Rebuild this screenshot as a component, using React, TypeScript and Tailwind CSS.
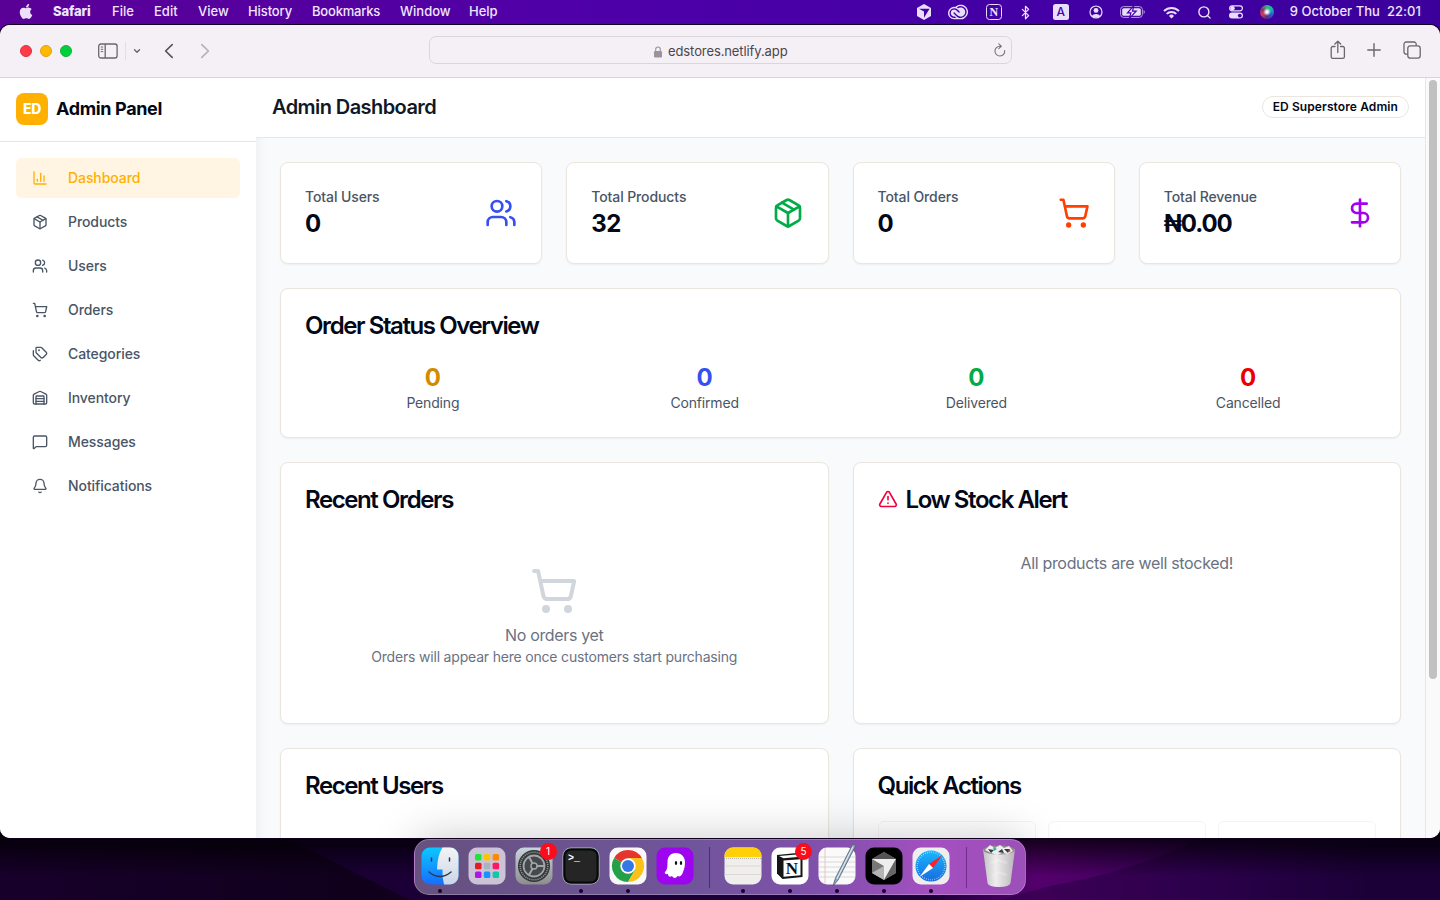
import React from "react";
import {
  Users, Package, ShoppingCart, DollarSign, Tags, Warehouse, MessageSquare, Bell,
  TriangleAlert, Search, ChevronDown, Bluetooth,
} from "lucide-react";
import { FaApple } from "react-icons/fa";
import { SiAdobecreativecloud } from "react-icons/si";

function ChartIcon() {
  return (
    <svg className="size-4" viewBox="0 0 24 24" fill="none" stroke="currentColor" strokeWidth="2" strokeLinecap="round" strokeLinejoin="round">
      <path d="M3 3v16a2 2 0 0 0 2 2h16" /><path d="M18 17V9" /><path d="M13 17V5" /><path d="M8 17v-3" />
    </svg>
  );
}

function CubeGlyph() {
  return (
    <svg className="w-[16px] h-[18px]" viewBox="0 0 16 18">
      <path d="M8 1 15 5v8l-7 4-7-4V5z" fill="#e9defa" />
      <path d="M3 5.8h10.6L8 14.8V8.6z" fill="#4700a8" />
    </svg>
  );
}

function MenuBar() {
  return (
    <div className="flex h-6 shrink-0 items-center justify-between text-[13px] font-medium text-[#efe5ff]">
      <div className="flex h-6 items-center pl-[19px]">
        <FaApple className="mr-[20px] h-[17px] w-[14px] -mt-px text-[#eee0fa]" />
        <span className="w-[59px] font-extrabold tracking-[-0.1px]">Safari</span>
        <span className="w-[42px]">File</span>
        <span className="w-[44px]">Edit</span>
        <span className="w-[50px]">View</span>
        <span className="w-[64px] tracking-[-0.1px]">History</span>
        <span className="w-[88px] tracking-[-0.2px]">Bookmarks</span>
        <span className="w-[69px]">Window</span>
        <span>Help</span>
      </div>
      <div className="flex h-6 items-center pr-[19px]">
        <CubeGlyph />
        <SiAdobecreativecloud className="ml-[16px] size-[20px] text-[#e9defa]" />
        <span className="ml-[18px] flex size-[16px] items-center justify-center rounded-[3.5px] border-[1.5px] border-[#e9defa] font-['Liberation_Serif'] text-[12px] font-bold leading-none">N</span>
        <Bluetooth className="ml-[16px] size-[15px]" strokeWidth={2} />
        <span className="ml-[20px] flex size-[16px] items-center justify-center rounded-[2.5px] bg-[#e9defa] text-[12px] font-medium leading-none text-[#4700a8]">A</span>
        <svg className="ml-[20px] size-[14px]" viewBox="0 0 14 14">
          <circle cx="7" cy="7" r="6" fill="none" stroke="#e9defa" strokeWidth="1.2" />
          <circle cx="7" cy="5.4" r="2.4" fill="#e9defa" /><path d="M2.8 11a4.6 3.4 0 0 1 8.4 0 6 6 0 0 1-8.4 0" fill="#e9defa" />
        </svg>
        <svg className="ml-[17px] h-[12px] w-[25px]" viewBox="0 0 25 12">
          <rect x=".6" y=".6" width="21.8" height="10.8" rx="3" fill="none" stroke="#b99be6" strokeWidth="1" />
          <rect x="2.2" y="2.2" width="18.6" height="7.6" rx="1.6" fill="#e9defa" />
          <path d="M13.8-.4 7.5 6.8h3.4L9.4 12.4l6.8-7.2h-3.6z" fill="#e9defa" stroke="#4700a8" strokeWidth="1.2" />
          <path d="M23.6 4v4q1.2-.6 1.2-2t-1.2-2" fill="#b99be6" />
        </svg>
        <svg className="ml-[18px] h-[13px] w-[17px]" viewBox="0 0 17 13" fill="none" stroke="#e9defa" strokeWidth="2">
          <path d="M1 5a10.6 10.6 0 0 1 15 0M3.7 7.9a6.8 6.8 0 0 1 9.6 0" /><path d="m8.5 12.5-2.5-2.6a3.5 3.500 0 0 1 5 0z" fill="#e9defa" stroke="none" />
        </svg>
        <Search className="ml-[17px] size-[15px]" strokeWidth={2.2} />
        <svg className="ml-[17px] h-[14px] w-[14px]" viewBox="0 0 14 14">
          <rect x=".6" y=".8" width="12.8" height="5" rx="2.500" fill="none" stroke="#e9defa" strokeWidth="1.2" /><circle cx="3.5" cy="3.3" r="2.2" fill="#e9defa" />
          <rect x="0" y="7.6" width="14" height="6" rx="3" fill="#e9defa" /><circle cx="10.8" cy="10.6" r="1.9" fill="#4700a8" />
        </svg>
        <span className="ml-[17px] size-[14px] rounded-full bg-[radial-gradient(circle,#ffffff_8%,transparent_40%),conic-gradient(#37b58a,#1bb3a4,#285ad6,#54307f,#d93468,#7d3d5c,#37b58a)]" />
        <span className="ml-[16px] whitespace-pre tracking-[0.05px]">9 October Thu  22:01</span>
      </div>
    </div>
  );
}

function Toolbar() {
  return (
    <div className="flex h-[53px] shrink-0 items-center border-b border-[#d8d4da] bg-[#f5eff6] text-[#6b666c]">
      <div className="flex w-[429px] items-center pl-5">
        <span className="size-3 rounded-full border border-[#e0303e] bg-[#ff3b46]" />
        <span className="ml-2 size-3 rounded-full border border-[#e0a314] bg-[#ffb900]" />
        <span className="ml-2 size-3 rounded-full border border-[#10b434] bg-[#00cf3c]" />
        <svg className="ml-[26px] h-[16px] w-[20px]" viewBox="0 0 20 16" fill="none" stroke="currentColor" strokeWidth="1.3">
          <rect x=".7" y="1" width="18.4" height="14" rx="2.2" /><path d="M7.2 1v14" /><path d="M2.8 4h2.4M2.8 6.3h2.4M2.8 8.6h2.4" strokeWidth="1" />
        </svg>
        <span className="ml-[7px] h-[18px] w-px bg-[#e2dce3]" />
        <ChevronDown className="ml-[6px] size-[10px]" strokeWidth={3.4} />
        <svg className="ml-[22px] h-[16px] w-[10px]" viewBox="0 0 10 16" fill="none" stroke="#565257" strokeWidth="1.6" strokeLinecap="round" strokeLinejoin="round"><path d="M8.2 1.6 1.6 8l6.6 6.4" /></svg>
        <svg className="ml-[26px] h-[16px] w-[10px]" viewBox="0 0 10 16" fill="none" stroke="#b5b0b7" strokeWidth="1.6" strokeLinecap="round" strokeLinejoin="round"><path d="M1.8 1.6 8.4 8l-6.6 6.4" /></svg>
      </div>
      <div className="-mt-[2px] flex h-7 w-[583px] items-center rounded-[7px] border border-[#dbd5dc] text-[13px] text-[#4a474b]">
        <span className="w-[223px]" />
        <svg className="mr-[5px] mt-[3px] h-[12px] w-[10px]" viewBox="0 0 10 12"><rect x="1" y="5" width="8" height="6.500" rx="1.200" fill="#99949b" /><path d="M2.700 5.500V3.300a2.300 2.300 0 0 1 4.600 0v2.200" fill="none" stroke="#99949b" strokeWidth="1.100" /></svg>
        <span className="pt-[3px] tracking-[-0.1px]">edstores.netlify.app</span>
        <span className="flex flex-1 justify-end pr-[5px]">
          <svg className="h-[14px] w-[12px]" viewBox="0 0 12 14" fill="none" stroke="#77727a" strokeWidth="1.1" strokeLinecap="round"><path d="M10.7 7.6A4.9 4.9 0 1 1 6 3.2h1M4.8.9 7.3 3.2 4.8 5.6" /></svg>
        </span>
      </div>
      <div className="ml-auto flex items-center pr-[19px]">
        <svg className="-mt-[3px] h-[20px] w-[16px]" viewBox="0 0 16 20" fill="none" stroke="currentColor" strokeWidth="1.3" strokeLinecap="round" strokeLinejoin="round"><path d="M5 6.5H2.8a1.6 1.6 0 0 0-1.6 1.6v8.6a1.6 1.6 0 0 0 1.6 1.6h10a1.6 1.6 0 0 0 1.6-1.6V8.100a1.6 1.6 0 0 0-1.600-1.600H10.600M7.800 12.500V1.200M4.900 4 7.800 1.200 10.700 4" /></svg>
        <svg className="-mt-[2px] ml-[21px] size-[14px]" viewBox="0 0 14 14" stroke="currentColor" strokeWidth="1.4" strokeLinecap="round"><path d="M7 .8v12.400M.8 7h12.400" /></svg>
        <svg className="-mt-[2px] ml-[22px] h-[18px] w-[18px]" viewBox="0 0 18 18" fill="none" stroke="currentColor" strokeWidth="1.3"><rect x="4.800" y="4.800" width="12.400" height="12.400" rx="2.400" /><path d="M4.800 13.200H3.200A2.200 2.200 0 0 1 1 11V3.200A2.200 2.200 0 0 1 3.200 1H11a2.200 2.200 0 0 1 2.200 2.200v1.600" /></svg>
      </div>
    </div>
  );
}

const nav = [
  { label: "Products", icon: Package },
  { label: "Users", icon: Users },
  { label: "Orders", icon: ShoppingCart },
  { label: "Categories", icon: Tags },
  { label: "Inventory", icon: Warehouse },
  { label: "Messages", icon: MessageSquare },
  { label: "Notifications", icon: Bell },
];

function Sidebar() {
  return (
    <aside className="z-10 flex w-64 shrink-0 flex-col bg-white shadow-[0_10px_15px_-3px_rgba(0,0,0,0.1)]">
      <div className="flex h-16 shrink-0 items-center gap-2 border-b border-gray-200 px-4 pb-[2px]">
        <span className="flex size-8 items-center justify-center rounded-lg bg-[#ffb000] text-[14px] font-extrabold tracking-[-0.3px] text-white">ED</span>
        <span className="text-[18px] font-bold tracking-[-0.35px] text-[#020817]">Admin Panel</span>
      </div>
      <nav className="flex flex-col gap-1 p-4 text-sm font-medium tracking-[-0.08px] text-gray-600">
        <a className="flex h-10 items-center gap-5 rounded-md bg-[#fff5e2] px-4 text-[#ffb000]"><ChartIcon />Dashboard</a>
        {nav.map(({ label, icon: Icon }) => (
          <a key={label} className="flex h-10 items-center gap-5 rounded-md px-4"><Icon className="size-4" />{label}</a>
        ))}
      </nav>
    </aside>
  );
}

const card = "rounded-lg border border-[#ebe6dd] bg-white shadow-[0_1px_2px_rgba(0,0,0,0.05)]";
const heading = "pt-px text-2xl font-semibold leading-6 tracking-[-1.41px] text-[#020817]";

const stats = [
  { label: "Total Users", value: "0", icon: Users, color: "text-[#364ff0]" },
  { label: "Total Products", value: "32", icon: Package, color: "text-[#00ab48]" },
  { label: "Total Orders", value: "0", icon: ShoppingCart, color: "text-[#ff4000]" },
  { label: "Total Revenue", value: "₦0.00", icon: DollarSign, color: "text-[#a400f0]" },
];

const statuses = [
  { label: "Pending", color: "text-[#d28b00]" },
  { label: "Confirmed", color: "text-[#364ff0]" },
  { label: "Delivered", color: "text-[#00ab48]" },
  { label: "Cancelled", color: "text-[#ea0000]" },
];

function Dashboard() {
  return (
    <main className="flex min-w-0 flex-1 flex-col bg-[#f9fafc]">
      <header className="z-20 flex h-[60px] shrink-0 items-center justify-between border-b border-gray-200 bg-white pb-[2px] pl-4 pr-4">
        <h1 className="text-xl font-semibold tracking-[-0.57px] text-[#111827]">Admin Dashboard</h1>
        <span className="flex h-[22px] items-center rounded-full border border-[#ebe6dd] px-[10px] text-xs font-semibold tracking-[0.1px] text-[#020817]">ED Superstore Admin</span>
      </header>
      <div className="flex flex-col gap-6 p-6">
        <div className="grid grid-cols-4 gap-6">
          {stats.map(({ label, value, icon: Icon, color }) => (
            <section key={label} className={`${card} flex h-[102px] items-center justify-between px-6`}>
              <div>
                <p className="text-sm font-medium tracking-[-0.1px] text-gray-600">{label}</p>
                <p className={`-mb-px pt-px text-2xl font-bold text-[#020817] ${value.length > 2 ? "tracking-[-1.1px]" : "tracking-[-0.4px]"}`}>{value}</p>
              </div>
              <Icon className={`size-8 ${color}`} />
            </section>
          ))}
        </div>
        <section className={`${card} h-[150px] p-6`}>
          <h2 className={heading}>Order Status Overview</h2>
          <div className="mt-6 grid grid-cols-4 gap-4 text-center">
            {statuses.map(({ label, color }) => (
              <div key={label}>
                <p className={`text-2xl font-bold ${color}`}>0</p>
                <p className="-mt-px text-sm tracking-[-0.17px] text-gray-600">{label}</p>
              </div>
            ))}
          </div>
        </section>
        <div className="grid grid-cols-2 gap-6">
          <section className={`${card} h-[262px] p-6`}>
            <h2 className={heading}>Recent Orders</h2>
            <div className="flex flex-col items-center pt-[55px] text-gray-500">
              <ShoppingCart className="size-12 text-gray-300" />
              <p className="mt-2 text-base tracking-[-0.35px]">No orders yet</p>
              <p className="text-sm tracking-[-0.19px]">Orders will appear here once customers start purchasing</p>
            </div>
          </section>
          <section className={`${card} h-[262px] p-6`}>
            <h2 className={`${heading} flex items-center gap-2`}><TriangleAlert className="-mt-[2px] size-5 text-[#f5003d]" />Low Stock Alert</h2>
            <p className="pt-[39px] text-center text-base tracking-[-0.32px] text-gray-500">All products are well stocked!</p>
          </section>
          <section className={`${card} h-[262px] p-6`}><h2 className={heading}>Recent Users</h2></section>
          <section className={`${card} h-[262px] p-6`}>
            <h2 className={heading}>Quick Actions</h2>
            <div className="mt-[23px] grid grid-cols-3 gap-3">
              <div className="h-24 rounded-md border border-[#f4f4f4]" />
              <div className="h-24 rounded-md border border-[#f4f4f4]" />
              <div className="h-24 rounded-md border border-[#f4f4f4]" />
            </div>
          </section>
        </div>
      </div>
    </main>
  );
}

function DockItem({ children, running, badge }: { children: React.ReactNode; running?: boolean; badge?: string }) {
  return (
    <div className="relative flex w-[47px] shrink-0 flex-col items-center pt-[5px]">
      {children}
      {running && <span className="mt-[2px] size-1 rounded-full bg-[#14002c]" />}
      {badge && <span className="absolute right-[1px] top-[3px] flex size-[17px] items-center justify-center rounded-full bg-[#fb0d1b] text-[10px] text-white">{badge}</span>}
    </div>
  );
}

const tile = "size-[42px]";
const launchColors = ["#20e33c", "#ffc400", "#ff8a00", "#e51b24", "#a9b4be", "#ff1665", "#b015e8", "#1795ff", "#12c7a5"];

function Dock() {
  return (
    <div className="absolute left-[414px] top-[839px] flex h-[56px] w-[612px] rounded-[15px] border border-white/25 bg-[linear-gradient(90deg,#66517f_0%,#70559a_45%,#8250ac_68%,#a54fc1_85%,#9c50b8_100%)] pl-[1.5px]">
      <DockItem running>
        <svg className={tile} viewBox="0 0 42 42">
          <defs><linearGradient id="finder" x2="0" y2="1"><stop stopColor="#0cc8ff" /><stop offset="1" stopColor="#176dff" /></linearGradient><linearGradient id="pale" x2="0" y2="1"><stop stopColor="#f4f4f6" /><stop offset="1" stopColor="#cbd5e5" /></linearGradient></defs>
          <rect x="2.500" y="2.500" width="37" height="37" rx="8.500" fill="url(#finder)" />
          <path d="M23.500 2.500H31a8.500 8.500 0 0 1 8.500 8.500v20a8.500 8.500 0 0 1-8.500 8.500h-6q-2-7-1.500-15H18Q18.500 10 23.500 2.500" fill="url(#pale)" />
          <path d="M12.500 13v3M30.500 13v3M10 27q11 9 22 0" fill="none" stroke="#263c55" strokeWidth="1.500" strokeLinecap="round" />
        </svg>
      </DockItem>
      <DockItem>
        <svg className={tile} viewBox="0 0 42 42">
          <rect x="2.500" y="2.500" width="37" height="37" rx="8.500" fill="#cdc3d7" />
          {launchColors.map((c, i) => <rect key={c} x={9 + (i % 3) * 8.8} y={9 + Math.floor(i / 3) * 8.8} width="6.500" height="6.500" rx="1.500" fill={c} />)}
        </svg>
      </DockItem>
      <DockItem badge="1">
        <svg className={tile} viewBox="0 0 42 42">
          <defs><linearGradient id="metal" x2="0" y2="1"><stop stopColor="#c8d4df" /><stop offset="1" stopColor="#8e8d8c" /></linearGradient></defs>
          <rect x="2.500" y="2.500" width="37" height="37" rx="8.500" fill="url(#metal)" />
          <circle cx="21" cy="21" r="16" fill="#34383b" />
          <circle cx="21" cy="21" r="13.800" fill="none" stroke="#8d9193" strokeWidth="1.600" strokeDasharray="1.2 .9" />
          <circle cx="21" cy="21" r="10.500" fill="#45494c" stroke="#a3a6a8" strokeWidth="1.800" />
          <path d="M21 21h10M21 21l-5-9M21 21l-5 9" stroke="#a3a6a8" strokeWidth="2" /><circle cx="21" cy="21" r="3" fill="#3b3f42" stroke="#a3a6a8" strokeWidth="1.500" />
        </svg>
      </DockItem>
      <DockItem running>
        <svg className={tile} viewBox="0 0 42 42">
          <rect x="2.500" y="2.500" width="37" height="37" rx="8.500" fill="#aabcc5" /><rect x="3.200" y="3.200" width="35.600" height="35.600" rx="8" fill="#080808" /><rect x="5.500" y="5.500" width="31" height="31" rx="5.500" fill="#252525" />
          <text x="8" y="15.500" fill="#fff" fontSize="10" fontWeight="700" fontFamily="Liberation Mono">&gt;_</text>
        </svg>
      </DockItem>
      <DockItem running>
        <svg className={tile} viewBox="0 0 42 42">
          <rect x="2.500" y="2.500" width="37" height="37" rx="8.500" fill="#f8f8f8" />
          <path d="M21 21 7.140 13A16 16 0 0 1 34.860 13z" fill="#e7342c" /><path d="M21 21 7.140 13A16 16 0 0 0 21 37l7-12z" fill="#24a04a" /><path d="M21 13h13.860A16 16 0 0 1 21 37l7-12z" fill="#fbc116" />
          <circle cx="21" cy="21" r="7.700" fill="#fff" /><circle cx="21" cy="21" r="6" fill="#3677e8" />
        </svg>
      </DockItem>
      <DockItem>
        <svg className={tile} viewBox="0 0 42 42">
          <rect x="2.500" y="2.500" width="37" height="37" rx="8.500" fill="#9c05ed" />
          <path d="M22 8c-6 0-8.500 4-8.500 9 0 6-.5 8-2.500 10-1 1.500 1 2.500 3 2 0 2.500 2 3.500 4 2 1.500 2.500 4 2.500 5.500 0 3 1.500 4.500-1 5.500-4C30.500 23.500 31 21 31 17c0-5-3.500-9-9-9" fill="#fff" />
          <ellipse cx="22" cy="18" rx="1.200" ry="2" fill="#111" /><ellipse cx="27" cy="18" rx="1.200" ry="2" fill="#111" />
        </svg>
      </DockItem>
      <span className="ml-[10.5px] mr-[9px] mt-[7px] h-[41px] w-px shrink-0 bg-[#49306c]" />
      <DockItem running>
        <svg className={tile} viewBox="0 0 42 42">
          <defs><clipPath id="note"><rect x="2.500" y="2.500" width="37" height="37" rx="8.500" /></clipPath></defs>
          <g clipPath="url(#note)"><path fill="#f0eeed" d="M2 2h38v38H2z" /><path fill="#ffcf08" d="M2 2h38v10H2z" /><path d="M2 13.500h38" stroke="#a9a79f" strokeDasharray="1 1" strokeWidth=".8" /><path d="M2 21h38M2 29.500h38" stroke="#d4d1ce" strokeWidth=".8" /></g>
        </svg>
      </DockItem>
      <DockItem running badge="5">
        <svg className={tile} viewBox="0 0 42 42">
          <rect x="2.500" y="2.500" width="37" height="37" rx="8.500" fill="#fff" />
          <path d="m8 10 20-2 5.500 4v20l-20 2L8 28.500z" fill="#151515" /><path d="m10 11 18-1.600 3.500 2.400-17 1.500zM14.500 15.500l17-1.300v16l-17 1.600z" fill="#fff" />
          <text x="16.800" y="29" fontFamily="Liberation Serif" fontSize="17" fontWeight="700" fill="#111">N</text>
        </svg>
      </DockItem>
      <DockItem running>
        <svg className={`${tile} overflow-visible`} viewBox="0 0 42 42">
          <rect x="2.500" y="2.500" width="37" height="37" rx="8.500" fill="#fafafa" /><path d="M3 12h36M3 17h36M3 22h36M3 27h36M3 32h36" stroke="#cecfd2" strokeWidth=".8" /><path d="M9 3v36" stroke="#e5b8bc" strokeWidth=".8" />
          <path d="M36.500-.5 19.500 33 17 41l5-6L39.500 1q-1-2-3-1.500" fill="#93abbb" stroke="#52606c" strokeWidth=".8" /><path d="m36.800 2-16 32" stroke="#dfeefa" strokeWidth="1.100" />
        </svg>
      </DockItem>
      <DockItem running>
        <svg className={tile} viewBox="0 0 42 42">
          <rect x="2.500" y="2.500" width="37" height="37" rx="8.500" fill="#000" />
          <path d="m21 7 12 7v14l-12 7-12-7V14z" fill="#8f8f8f" /><path d="m21 7 12 7H9z" fill="#545454" /><path d="M9 14v14l12-7z" fill="#777" /><path d="m9 14 24 0L21 35V21z" fill="#eee" /><path d="M33 14v14l-12 7z" fill="#666" /><path d="m9 28 12-7v14z" fill="#b4b4b4" />
        </svg>
      </DockItem>
      <DockItem running>
        <svg className={tile} viewBox="0 0 42 42">
          <defs><linearGradient id="compass" x2="0" y2="1"><stop stopColor="#18b7ff" /><stop offset="1" stopColor="#186bdd" /></linearGradient></defs>
          <rect x="2.500" y="2.500" width="37" height="37" rx="8.500" fill="#eee" /><circle cx="21" cy="21" r="15.500" fill="url(#compass)" /><circle cx="21" cy="21" r="13.800" fill="none" stroke="#dff6ff" strokeWidth="1.500" strokeDasharray=".5 1.670" />
          <path d="M32.500 10 19 19l4 4z" fill="#f5252b" /><path d="m9.500 32 9.500-13 4 4z" fill="#fff" />
        </svg>
      </DockItem>
      <span className="ml-[12px] mr-[8px] mt-[7px] h-[41px] w-px shrink-0 bg-[#742c91]" />
      <DockItem>
        <svg className="h-[44px] w-[42px]" viewBox="0 0 42 44">
          <defs><linearGradient id="bin"><stop stopColor="#c2c1c3" /><stop offset=".4" stopColor="#efeded" /><stop offset="1" stopColor="#b9b6ba" /></linearGradient></defs>
          <path d="M5 4h32l-4.500 34q-1 4-11.500 4T9.500 38z" fill="url(#bin)" /><ellipse cx="21" cy="5" rx="15.800" ry="4.500" fill="#8d8c8c" />
          <path d="m7 5 5-5 5 3 5-3 4 3 5-2 4 5-5 3-6-1-5 2-6-2z" fill="#eee" /><path d="m10 4 3 4 3-3zM26 4l4 4 2-4zM20 7l4-3 2 4z" fill="#343a3e" /><path d="m15 2 4 2-3 2z" fill="#32a99a" /><path d="m30 4 3 2-2 1z" fill="#b54035" />
          <path d="m13 18 7-3 9 3M14 31l7-4 8 3" fill="none" stroke="#fff" strokeOpacity=".25" strokeWidth="2" />
        </svg>
      </DockItem>
    </div>
  );
}

export default function App() {
  return (
    <div className="relative flex h-[900px] w-[1440px] flex-col overflow-hidden bg-[linear-gradient(90deg,#5a0097,#4f00a8_40%,#4300a5_70%,#3b009c)] font-['Inter','Liberation_Sans',sans-serif]">
      <div className="absolute inset-x-0 bottom-0 h-[80px] bg-[#17002c]">
        <svg className="h-full w-full" viewBox="0 0 1440 80">
          <defs>
            <linearGradient id="wall"><stop stopColor="#18002b" /><stop offset=".25" stopColor="#10001c" /><stop offset=".65" stopColor="#1e003b" /><stop offset=".72" stopColor="#54006c" /><stop offset=".84" stopColor="#350058" /><stop offset=".95" stopColor="#1c0038" /></linearGradient>
            <linearGradient id="shade" x2="0" y2="1"><stop offset=".2" stopColor="#000" stopOpacity=".8" /><stop offset=".7" stopColor="#000" stopOpacity="0" /></linearGradient>
          </defs>
          <path fill="url(#wall)" d="M0 0h1440v80H0z" /><path d="M290 20 410 80h530l-15-20 0-60z" fill="#1b0036" /><path d="M1050 66q90-16 150-48h240v62h-440z" fill="#1b0036" opacity=".4" /><path fill="url(#shade)" d="M0 0h1440v80H0z" />
        </svg>
      </div>
      <MenuBar />
      <div className="relative mt-px flex h-[813px] shrink-0 flex-col overflow-hidden rounded-[10px] bg-white shadow-[0_0_0_1px_#100020]">
        <Toolbar />
        <div className="flex h-[760px] min-h-0 overflow-hidden">
          <Sidebar />
          <Dashboard />
          <div className="z-10 flex w-[15px] shrink-0 justify-center border-l border-[#e7e7e7] bg-[#fafafa] pt-[2px]"><span className="h-[599px] w-2 rounded-full bg-[#c1c1c1]" /></div>
        </div>
        <div className="absolute left-[414px] top-[814px] z-30 h-[56px] w-[612px] rounded-[15px] shadow-[0_0_45px_rgba(0,0,0,0.22)]" />
      </div>
      <Dock />
    </div>
  );
}
